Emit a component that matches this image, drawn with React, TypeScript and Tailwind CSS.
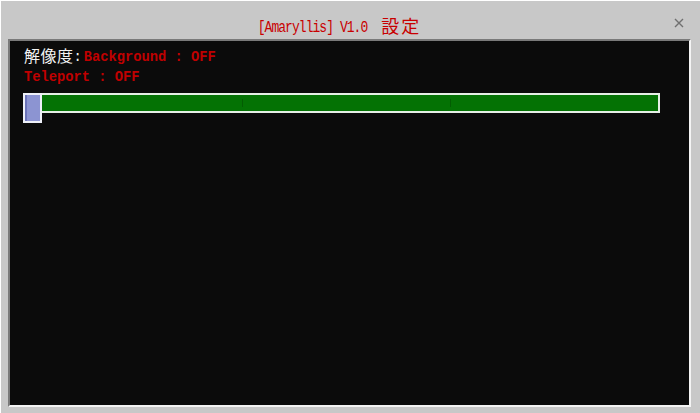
import React from 'react'

const mono = "font-['Liberation_Mono','Noto_Sans_CJK_JP',monospace]"

const CloseIcon = () => (
    <svg width="10" height="10" viewBox="0 0 10 10" className="text-[#707070]">
        <path d="M1 1L9 9M9 1L1 9" stroke="currentColor" strokeWidth="1.4" />
    </svg>
)

const Slider = () => {
    return (
        <div className="relative ml-[13px] mt-[2px] h-[30px] w-[637px]">
            {/* track */}
            <div className="mt-[5px] flex h-[20px] w-full items-center justify-between border-2 border-[#e6efe6] bg-[#047204] pl-[217px] pr-[207px]">
                <span className="h-[8px] w-px bg-[#035c03]" />
                <span className="h-[8px] w-px bg-[#035c03]" />
            </div>
            {/* thumb */}
            <div className="absolute left-0 top-0 flex h-[30px] w-[19px] border-2 border-[#eef0f8] bg-[#8c94d2]">
                <span className="h-full w-[2px] bg-[#6a72b8]" />
            </div>
        </div>
    )
}

export default function App() {
    return (
        <div className="flex h-[413px] w-[700px] flex-col overflow-hidden border-l border-t border-white bg-[#c8c8c8]">
            <div className="relative flex h-[38px] shrink-0 items-center justify-center pr-[22px] pt-[15px]">
                <div className={`${mono} flex items-center text-[#c80000]`}>
                    <span className="inline-block scale-y-[1.2] text-[13px] leading-none tracking-[-0.95px]">[Amaryllis] V1.0</span>
                    <span className="ml-[14px] text-[18px] leading-none tracking-[2px]">設定</span>
                </div>
                <div className="absolute right-[16px] top-[17px]">
                    <CloseIcon />
                </div>
            </div>

            <div className="ml-[7px] h-[368px] w-[683px] border-2 border-b-[#f4f4f4] border-l-[#7a7a7a] border-r-[#f4f4f4] border-t-[#7a7a7a] bg-[#0b0b0b]">
                <div className={`${mono} pl-[14px] pt-[7px] text-[13.75px] leading-[20px]`}>
                    <div className="flex items-center">
                        <span className="text-[16px] tracking-[0.5px] text-[#f2f2f2]">解像度</span>
                        <span className="text-[#f2f2f2]">:</span>
                        <span className="ml-[2px] font-bold text-[#c00000]">Background : OFF</span>
                    </div>
                    <div className="font-bold text-[#c00000]">Teleport : OFF</div>
                </div>
                <Slider />
            </div>
        </div>
    )
}
